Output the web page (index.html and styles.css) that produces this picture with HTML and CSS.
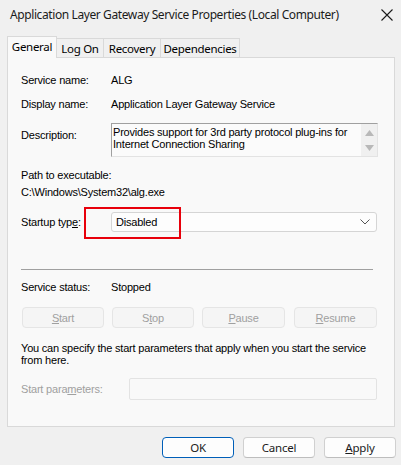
FILE: index.html
```html
<!DOCTYPE html>
<html lang="en">
<head>
    <meta charset="UTF-8">
    <meta name="viewport" content="width=device-width, initial-scale=1.0">
    <title>Application Layer Gateway Service Properties (Local Computer)</title>
    <link rel="stylesheet" href="styles.css">
</head>
<body>
    <div class="window">
        <div class="titlebar">
            <span class="title">Application Layer Gateway Service Properties (Local Computer)</span>
            <span class="close">
                <svg width="14" height="14" viewBox="0 0 14 14"><path d="M1.5 1.5 L12.5 12.5 M12.5 1.5 L1.5 12.5" stroke="#1b1b1b" stroke-width="1.1" fill="none"/></svg>
            </span>
        </div>

        <div class="tabs">
            <div class="tab active">General</div>
            <div class="tab">Log On</div>
            <div class="tab">Recovery</div>
            <div class="tab">Dependencies</div>
        </div>

        <div class="panel">
            <div class="row first">
                <span class="label">Service name:</span>
                <span>ALG</span>
            </div>
            <div class="row gap11">
                <span class="label">Display name:</span>
                <span>Application Layer Gateway Service</span>
            </div>
            <div class="row desc-row">
                <span class="label desc-label">Description:</span>
                <div class="desc-box">
                    <div class="desc-text">Provides support for 3rd party protocol plug-ins for Internet Connection Sharing</div>
                    <div class="scroll">
                        <svg width="9" height="6" viewBox="0 0 9 6"><path d="M0 6 L4.5 0 L9 6 Z" fill="#b8b8b8"/></svg>
                        <svg width="9" height="6" viewBox="0 0 9 6"><path d="M0 0 L4.5 6 L9 0 Z" fill="#b8b8b8"/></svg>
                    </div>
                </div>
            </div>
            <div class="line path-label">Path to executable:</div>
            <div class="line path-value">C:\Windows\System32\alg.exe</div>
            <div class="row startup-row">
                <span class="label">Startup typ<u>e</u>:</span>
                <div class="combo">
                    <span>Disabled</span>
                    <svg width="10" height="6" viewBox="0 0 10 6"><path d="M0.5 0.5 L5 5 L9.5 0.5" stroke="#555" stroke-width="1" fill="none"/></svg>
                </div>
                <div class="highlight"></div>
            </div>
            <div class="separator"></div>
            <div class="row status-row">
                <span class="label">Service status:</span>
                <span>Stopped</span>
            </div>
            <div class="svc-buttons">
                <button class="btn-disabled"><u>S</u>tart</button>
                <button class="btn-disabled">S<u>t</u>op</button>
                <button class="btn-disabled"><u>P</u>ause</button>
                <button class="btn-disabled"><u>R</u>esume</button>
            </div>
            <div class="hint">You can specify the start parameters that apply when you start the service from here.</div>
            <div class="row params-row">
                <span class="label params-label">Start para<u>m</u>eters:</span>
                <div class="params-input"></div>
            </div>
        </div>

        <div class="footer">
            <button class="btn default">OK</button>
            <button class="btn">Cancel</button>
            <button class="btn"><u>A</u>pply</button>
        </div>
    </div>
</body>
</html>
```

FILE: styles.css
```css
* {
    box-sizing: border-box;
}
body {
    margin: 0;
    background: #f0f0f0;
    font-family: "Liberation Sans", Arial, sans-serif;
    font-size: 11px;
    letter-spacing: -0.2px;
    color: #000;
}
.window {
    width: 401px;
    height: 465px;
    overflow: hidden;
}
.titlebar {
    height: 30px;
    display: flex;
    align-items: center;
    justify-content: space-between;
    padding: 0 7px 1px 10px;
}
.title {
    font-family: "Noto Sans", sans-serif;
    font-size: 12px;
    letter-spacing: -0.4px;
    color: #1b1b1b;
}
.close {
    display: flex;
    width: 14px;
    height: 14px;
}
.tabs {
    display: flex;
    align-items: flex-end;
    height: 27px;
    padding: 6px 0 0 7px;
    font-family: "Noto Sans", sans-serif;
    font-size: 11.5px;
    letter-spacing: -0.3px;
}
.tab {
    height: 19px;
    padding: 0;
    white-space: nowrap;
    border: 1px solid #d9d9d9;
    border-bottom: none;
    border-left: none;
    background: #f0f0f0;
    display: flex;
    align-items: center;
    justify-content: center;
}
.tab.active {
    height: 22px;
    width: 50px;
    background: #f9f9f9;
    border-left: 1px solid #d9d9d9;
    padding-bottom: 3px;
    margin-bottom: -1px;
    position: relative;
}
.tab:nth-child(2) { width: 47px; }
.tab:nth-child(3) { width: 57px; }
.tab:nth-child(4) { width: 79px; }
.panel {
    margin-left: 7px;
    width: 388px;
    height: 370px;
    border: 1px solid #d9d9d9;
    background: #f9f9f9;
    padding: 16px 0 0 13px;
}
.row {
    display: flex;
    align-items: center;
    line-height: 13px;
}
.label {
    width: 90px;
    flex-shrink: 0;
}
.gap11 {
    margin-top: 11px;
}
.desc-row {
    margin-top: 12px;
    align-items: flex-start;
}
.desc-label {
    padding-top: 6px;
}
.desc-box {
    width: 267px;
    height: 34px;
    border: 1px solid #e3e3e3;
    border-top-color: #a0a0a0;
    border-left-color: #a0a0a0;
    background: #fbfbfb;
    display: flex;
}
.desc-text {
    flex: 1;
    padding: 2px 0 0 1px;
    line-height: 12px;
}
.scroll {
    width: 16px;
    background: #f0f0f0;
    display: flex;
    flex-direction: column;
    align-items: center;
    justify-content: space-between;
    padding: 6px 0 5px;
}
.line {
    line-height: 13px;
}
.path-label {
    margin-top: 12px;
}
.path-value {
    margin-top: 4px;
}
.startup-row {
    margin-top: 13px;
    position: relative;
}
.combo {
    width: 266px;
    height: 20px;
    border: 1px solid #d5d5d5;
    border-radius: 3px;
    background: #fdfdfd;
    display: flex;
    align-items: center;
    justify-content: space-between;
    padding: 0 6px 0 4px;
}
.highlight {
    position: absolute;
    left: 63px;
    top: -5px;
    width: 97px;
    height: 32px;
    border: 2px solid #e8000b;
}
.separator {
    margin-top: 37px;
    width: 352px;
    height: 1px;
    background: #a0a0a0;
}
.status-row {
    margin-top: 11px;
}
.svc-buttons {
    display: flex;
    gap: 8px;
    margin-top: 13px;
    width: 356px;
    margin-left: 1px;
}
button {
    font: inherit;
    letter-spacing: inherit;
    margin: 0;
    padding: 0;
}
.btn-disabled {
    width: 82px;
    height: 21px;
    background: #f5f5f5;
    border: 1px solid #e5e5e5;
    border-radius: 4px;
    color: #a0a0a0;
}
.btn-disabled:nth-child(3),
.btn-disabled:nth-child(4) {
    width: 83px;
}
.btn-disabled:nth-child(4) {
    margin-left: 1px;
}
.hint {
    margin-top: 14px;
    width: 360px;
    line-height: 12px;
}
.params-row {
    margin-top: 12px;
}
.params-label {
    width: 108px;
    color: #a0a0a0;
}
.params-input {
    width: 248px;
    height: 22px;
    border: 1px solid #e3e3e3;
    border-radius: 2px;
    background: #f9f9f9;
}
.footer {
    display: flex;
    justify-content: flex-end;
    gap: 9px;
    padding: 10px 5px 0 0;
}
.btn {
    width: 72px;
    height: 21px;
    background: #fdfdfd;
    border: 1px solid #d0d0d0;
    border-bottom-color: #bdbdbd;
    border-radius: 4px;
    font-family: "Noto Sans", sans-serif;
    font-size: 11.5px;
    color: #1b1b1b;
}
.btn.default {
    border: 1px solid #005fb8;
    box-shadow: inset 0 0 0 1px #ffffff;
}
```
